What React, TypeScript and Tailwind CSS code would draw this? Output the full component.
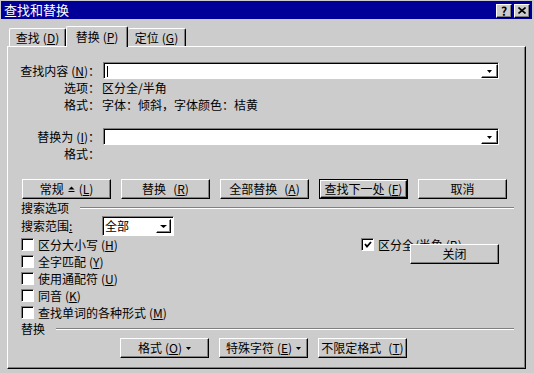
import type { ReactNode } from "react";

const raised =
  "border border-t-white border-l-white border-r-black border-b-black shadow-[inset_-1px_-1px_0_#808080]";
const sunken =
  "border border-t-[#808080] border-l-[#808080] border-r-white border-b-white shadow-[inset_1px_1px_0_#000]";

const DownArrow = ({ w = 5 }: { w?: number }) => (
  <svg width={w} height={3} viewBox={`0 0 ${w} 3`} className="shrink-0">
    <polygon points={`0,0 ${w},0 ${w / 2},3`} fill="#000" />
  </svg>
);

// mnemonic key, e.g. " (N)"
const K = ({ k }: { k: string }) => (
  <span className="ml-[3px]">
    (<u>{k}</u>)
  </span>
);

function Btn({ children, isDefault }: { children: ReactNode; isDefault?: boolean }) {
  if (isDefault) {
    return (
      <div className="w-[89px] h-[20px] border border-black flex">
        <div className={`flex-1 flex items-center justify-center ${raised}`}>{children}</div>
      </div>
    );
  }
  return (
    <div className={`w-[89px] h-[20px] flex items-center justify-center gap-[4px] ${raised}`}>{children}</div>
  );
}

function Combo({ width, children }: { width: string; children?: ReactNode }) {
  return (
    <div className={`${width} h-[17px] bg-white flex items-stretch ${sunken} pl-[2px] pt-[1px]`}>
      <div className="flex-1 flex items-center">{children}</div>
      <div className={`w-[17px] flex items-center justify-center ${raised}`}>
        <DownArrow />
      </div>
    </div>
  );
}

function Check({ label, checked }: { label: ReactNode; checked?: boolean }) {
  return (
    <div className="flex items-center gap-[4px]">
      <div className={`w-[13px] h-[13px] bg-white flex items-center justify-center ${sunken}`}>
        {checked && (
          <svg width="8" height="7" viewBox="0 0 8 7">
            <polyline points="1,3 3,5.5 7,1" fill="none" stroke="#000" strokeWidth="1.8" />
          </svg>
        )}
      </div>
      <span>{label}</span>
    </div>
  );
}

function Section({ title }: { title: string }) {
  return (
    <div className="h-[16px] flex items-center gap-[11px] pl-[13px] mr-[11px]">
      <span>{title}</span>
      <div className="flex-1 h-[2px] border-t border-t-[#808080] border-b border-b-white" />
    </div>
  );
}

export default function App() {
  return (
    <div className="w-[534px] h-[373px] bg-[#cccccc] flex flex-col pt-[1px] overflow-hidden text-[12px] leading-[14px] text-black font-['Noto_Sans_CJK_SC','Noto_Sans',sans-serif]">
      {/* title bar */}
      <div className="ml-[1px] w-[531px] h-[18px] bg-[#000099] flex items-center justify-between pl-[3px] pr-[2px]">
        <span className="text-white text-[13px]">查找和替换</span>
        <div className="flex gap-[2px] mt-[1px]">
          <div className={`w-[16px] h-[14px] bg-[#cccccc] flex items-center justify-center font-bold text-[12px] leading-none ${raised}`}>
            ?
          </div>
          <div className={`w-[16px] h-[14px] bg-[#cccccc] flex items-center justify-center ${raised}`}>
            <svg width="8" height="7" viewBox="0 0 8 7">
              <path d="M0.5 0.5 L7.5 6.5 M7.5 0.5 L0.5 6.5" stroke="#000" strokeWidth="1.6" />
            </svg>
          </div>
        </div>
      </div>

      {/* tabs */}
      <div className="mt-[7px] h-[20px] flex items-end pl-[9px]">
        <div className="w-[57px] h-[18px] border-t border-l border-t-white border-l-white border-r border-r-black shadow-[inset_-1px_0_0_#808080] rounded-t-[2px] flex items-center justify-center">
          查找<K k="D" />
        </div>
        <div className="relative z-10 w-[62px] h-[21px] -mb-[1px] bg-[#cccccc] border-t border-l border-t-white border-l-white border-r border-r-black shadow-[inset_-1px_0_0_#808080] rounded-t-[2px] flex items-center justify-center pb-[1px]">
          替换<K k="P" />
        </div>
        <div className="w-[58px] h-[18px] border-t border-t-white border-r border-r-black shadow-[inset_-1px_0_0_#808080] rounded-t-[2px] flex items-center justify-center">
          定位<K k="G" />
        </div>
      </div>

      {/* panel */}
      <div className="ml-[7px] w-[519px] h-[323px] border border-t-white border-l-white border-r-black border-b-black shadow-[inset_-1px_-1px_0_#808080] flex flex-col pt-[15px]">
        <div className="h-[17px] flex items-center">
          <div className="w-[92px] text-right">
            查找内容<K k="N" />：
          </div>
          <div className="ml-[3px]">
            <Combo width="w-[396px]">
              <span className="ml-[1px] w-[1px] h-[11px] bg-black" />
            </Combo>
          </div>
        </div>
        <div className="h-[17px] flex items-center">
          <div className="w-[92px] text-right">选项：</div>
          <div className="ml-[2px]">区分全/半角</div>
        </div>
        <div className="h-[17px] flex items-center">
          <div className="w-[92px] text-right">格式：</div>
          <div className="ml-[2px]">字体：倾斜，字体颜色：桔黄</div>
        </div>

        <div className="mt-[15px] h-[17px] flex items-center">
          <div className="w-[92px] text-right">
            替换为<K k="I" />：
          </div>
          <div className="ml-[3px]">
            <Combo width="w-[396px]" />
          </div>
        </div>
        <div className="h-[18px] flex items-center">
          <div className="w-[92px] text-right">格式：</div>
        </div>

        <div className="mt-[16px] flex gap-[10px] pl-[14px]">
          <Btn>
            <span>常规</span>
            <svg width="7" height="7" viewBox="0 0 7 7">
              <polygon points="0.5,3.5 3.5,0.5 6.5,3.5" fill="#000" />
              <rect x="0.5" y="5" width="6" height="1" fill="#000" />
            </svg>
            <span>
              (<u>L</u>)
            </span>
          </Btn>
          <Btn>
            替换<K k="R" />
          </Btn>
          <Btn>
            全部替换<K k="A" />
          </Btn>
          <Btn isDefault>
            查找下一处<K k="F" />
          </Btn>
          <Btn>取消</Btn>
        </div>

        <div className="mt-[1px]">
          <Section title="搜索选项" />
        </div>

        <div className="h-[20px] flex items-center pl-[13px]">
          <div className="w-[81px]">
            搜索范围<u>:</u>
          </div>
          <div className={`w-[72px] h-[20px] bg-white flex items-center ${sunken} pl-[2px] pr-[2px]`}>
            <span className="flex-1">全部</span>
            <div className={`w-[15px] h-[14px] flex items-center justify-center ${raised}`}>
              <DownArrow w={7} />
            </div>
          </div>
        </div>

        <div className="relative h-[17px] flex items-center pl-[13px]">
          <div className="w-[340px]">
            <Check label={<>区分大小写<K k="H" /></>} />
          </div>
          <Check checked label={<>区分全/半角<K k="B" /></>} />
          <div className={`absolute left-[402px] top-[8px] w-[89px] h-[20px] bg-[#cccccc] flex items-center justify-center ${raised}`}>
            关闭
          </div>
        </div>
        <div className="h-[17px] flex items-center pl-[13px]">
          <Check label={<>全字匹配<K k="Y" /></>} />
        </div>
        <div className="h-[17px] flex items-center pl-[13px]">
          <Check label={<>使用通配符<K k="U" /></>} />
        </div>
        <div className="h-[17px] flex items-center pl-[13px]">
          <Check label={<>同音<K k="K" /></>} />
        </div>
        <div className="h-[17px] flex items-center pl-[13px]">
          <Check label={<>查找单词的各种形式<K k="M" /></>} />
        </div>

        <Section title="替换" />

        <div className="mt-[1px] flex gap-[10px] pl-[112px]">
          <Btn>
            <span>
              格式<K k="O" />
            </span>
            <DownArrow />
          </Btn>
          <Btn>
            <span>
              特殊字符<K k="E" />
            </span>
            <DownArrow />
          </Btn>
          <Btn>
            不限定格式<K k="T" />
          </Btn>
        </div>
      </div>
    </div>
  );
}
